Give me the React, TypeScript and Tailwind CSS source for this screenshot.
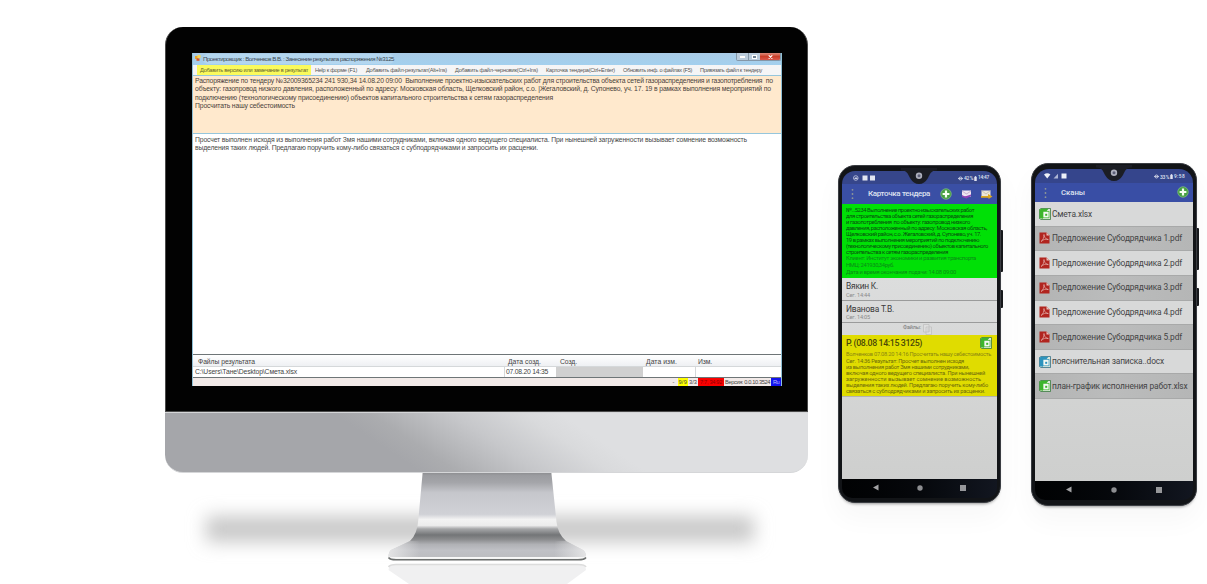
import { useLayoutEffect, useRef, useState, type ReactNode } from "react";

/** One line of text whose letter spacing is set so that it spans the given width. */
function Line({ w, className = "", children }: { w: number; className?: string; children: string }) {
  const ref = useRef<HTMLSpanElement>(null);
  const [spacing, setSpacing] = useState(0);
  useLayoutEffect(() => {
    const el = ref.current;
    if (!el) return;
    const natural = el.getBoundingClientRect().width;
    setSpacing((w - natural) / children.length);
  }, [w, children]);
  return (
    <div className={`whitespace-pre ${className}`}>
      <span ref={ref} style={{ letterSpacing: spacing }}>{children}</span>
    </div>
  );
}

function TitleBar() {
  return (
    <div className="flex h-[12px] shrink-0 items-start bg-linear-to-b from-[#a9cbe6] to-[#a3d0ee] pl-[2px]">
      <svg className="mt-[2px] mr-[2px] h-[6px] w-[6px]" viewBox="0 0 6 6">
        <rect x="0" y="1" width="3" height="3" fill="#e8a62c" />
        <rect x="2.4" y="0" width="3.2" height="3" fill="#f6d65a" />
        <rect x="1.5" y="3.4" width="3" height="2.4" fill="#d9552c" />
      </svg>
      <Line w={191} className="mt-px rounded-full bg-[#b3d6ef] text-[6.1px] leading-[10px] text-[#3c4854]">
        Проектировщик : Волченков В.В. : Занесение результата распоряжения №3125
      </Line>
      <div className="ml-auto flex h-[8px] w-[45px] overflow-hidden rounded-b-[2px] border-x border-b border-[#8497a8]">
        <div className="flex w-[12px] items-center justify-center border-r border-[#8497a8] bg-[#bccddd]">
          <div className="h-[2px] w-[5px] bg-white" />
        </div>
        <div className="flex w-[11px] items-center justify-center bg-[#bccddd]">
          <div className="h-[4px] w-[5px] border border-white bg-[#6f8090]" />
        </div>
        <div className="flex flex-1 items-center justify-center bg-linear-to-b from-[#dd8b7c] via-[#c93e29] to-[#d9574a]">
          <svg className="h-[4px] w-[5px]" viewBox="0 0 5 4"><path d="M.7 .3 4.3 3.7M4.3 .3 .7 3.7" stroke="#fff" strokeWidth="1.1" /></svg>
        </div>
      </div>
    </div>
  );
}

const tools: [string, number, string][] = [
  ["Help к форме (F1)", 42, "ml-[4px]"],
  ["Добавить файл-результат(Alt+Ins)", 81, "ml-[9px]"],
  ["Добавить файл-черновик(Ctrl+Ins)", 83, "ml-[8px]"],
  ["Карточка тендера(Ctrl+Enter)", 69, "ml-[8px]"],
  ["Обновить инф. о файлах (F5)", 69, "ml-[8px]"],
  ["Привязать файл к тендеру", 62, "ml-[8px]"],
];

function MonitorScreen() {
  return (
    <div className="flex h-[333px] w-[590px] flex-col overflow-hidden border-x border-[#8fc0d6] bg-white">
      <TitleBar />
      <div className="flex h-[10px] shrink-0 items-center bg-[#f5f5f6] pl-[4px] text-[5.6px] leading-[10px] text-[#555]">
        <div className="bg-[#fafa5c] px-[3px]">
          <Line w={108} className="text-[#62622e]">Добавить версию или замечание в результат</Line>
        </div>
        {tools.map(([t, w, m]) => <Line key={t} w={w} className={m}>{t}</Line>)}
      </div>
      <div className="h-[59px] shrink-0 border-y border-[#96c6dc] bg-[#ffe9cd] pt-[1px] pl-[2px] text-[6.8px] leading-[8.3px] text-[#4a423c]">
        <Line w={578}>Распоряжение по тендеру №32009365234 241 930,34 14.08.20 09:00  Выполнение проектно-изыскательских работ для строительства объекта сетей газораспределения и газопотребления  по</Line>
        <Line w={576}>объекту: газопровод низкого давления, расположенный по адресу: Московская область, Щелковский район, с.о. |Жегаловский, д. Супонево, уч. 17. 19 в рамках выполнения мероприятий по</Line>
        <Line w={358}>подключению (технологическому присоединению) объектов капитального строительства к сетям газораспределения</Line>
        <Line w={100}>Просчитать нашу себестоимость</Line>
      </div>
      <div className="min-h-0 flex-1 pt-[2px] pl-[2px] text-[6.8px] leading-[8.3px] text-[#484848]">
        <Line w={552}>Просчет выполнен исходя из выполнения работ Змя нашими сотрудниками, включая одного ведущего специалиста. При нынешней загруженности вызывает сомнение возможность</Line>
        <Line w={343}>выделения таких людей. Предлагаю поручить кому-либо связаться с субподрядчиками и запросить их расценки.</Line>
      </div>
      <div className="h-[24px] shrink-0 border-y border-[#6e7577] text-[6.8px] text-[#444]">
        <div className="grid h-[12px] grid-cols-[311px_52px_87px_52px_1fr] border-b border-[#d5d8da] bg-linear-to-b from-white to-[#eef0f3] leading-[13px]">
          <Line w={57} className="pl-[5px]">Файлы результата</Line>
          <Line w={33} className="pl-[4px]">Дата созд.</Line>
          <Line w={17} className="pl-[4px]">Созд.</Line>
          <Line w={31} className="pl-[3px]">Дата изм.</Line>
          <Line w={14} className="pl-[3px]">Изм.</Line>
        </div>
        <div className="grid h-[10px] grid-cols-[311px_52px_87px_52px_1fr] leading-[10px]">
          <Line w={102} className="pl-[2px]">C:\Users\Танe\Desktop\Смета.xlsx</Line>
          <Line w={42} className="border-l border-[#d5d8da] pl-px">07.08.20 14:35</Line>
          <div className="bg-[#d0d0d0]" />
          <div />
          <div className="border-l border-[#d5d8da]" />
        </div>
      </div>
      <div className="flex h-[8px] shrink-0 items-center justify-end bg-[#f2eae8] text-[5.7px] leading-[8px] text-[#444]">
        <Line w={2} className="mr-[3px]">-</Line>
        <Line w={8.5} className="bg-[#ffff00] px-px">9/9</Line>
        <Line w={8} className="px-px">3/3</Line>
        <Line w={22} className="bg-[#f90000] px-[2px] text-[#8c0000]">7:7, 34:92</Line>
        <Line w={45} className="px-[1px]">Версия: 0.0.10.3524</Line>
        <Line w={6} className="bg-[#1212ee] px-[2px] text-[#b9b9ff]">Ru</Line>
      </div>
    </div>
  );
}

function Stand() {
  return (
    <svg className="block h-[111px] w-[643px]" viewBox="165 473 643 111">
      <defs>
        <linearGradient id="neck" gradientUnits="userSpaceOnUse" x1="0" y1="473" x2="0" y2="559">
          <stop offset="0" stopColor="#8f9093" />
          <stop offset=".03" stopColor="#9b9ca0" />
          <stop offset=".11" stopColor="#a4a5a9" />
          <stop offset=".23" stopColor="#c6c7cc" />
          <stop offset=".48" stopColor="#d0d1d6" />
          <stop offset=".54" stopColor="#f3f3f3" />
          <stop offset=".61" stopColor="#ececec" />
          <stop offset=".65" stopColor="#a5a6a8" />
          <stop offset=".72" stopColor="#737577" />
          <stop offset=".77" stopColor="#898a8c" />
          <stop offset=".83" stopColor="#b0b1b5" />
          <stop offset=".9" stopColor="#c0c1c6" />
          <stop offset="1" stopColor="#bbbcbf" />
        </linearGradient>
        <linearGradient id="edge">
          <stop offset="0" stopColor="#f0f0f0" stopOpacity=".75" />
          <stop offset=".16" stopColor="#f0f0f0" stopOpacity="0" />
          <stop offset=".84" stopColor="#f0f0f0" stopOpacity="0" />
          <stop offset="1" stopColor="#f0f0f0" stopOpacity=".75" />
        </linearGradient>
        <filter id="soft" x="-10%" y="-120%" width="120%" height="340%"><feGaussianBlur stdDeviation="9" /></filter>
      </defs>
      <rect x="206" y="516" width="548" height="26" fill="#c8c8c8" filter="url(#soft)" />
      <path d="M422.6 473 L418.4 519 Q417.5 534 410 541 L391 550 Q388.5 552 388.5 557 H586 Q586 552 583 550 L566 541 Q558 534 556.5 522 L551.4 473Z" fill="url(#neck)" />
      <path d="M410 541 L391 550 Q388.5 552 388.5 557 H586 Q586 552 583 550 L566 541Z" fill="url(#edge)" />
      <path d="M388.5 555.5 Q389 557.5 396 557.5 H578 Q585 557.5 586 555.5 Q586 560.5 578 560.5 H396 Q389 560.5 388.5 555.5Z" fill="#f4f4f4" />
      <path d="M388.5 557.5 Q390 559.8 396 559.8 H578 Q584.5 559.8 586 557.5" fill="none" stroke="#6c6f6e" strokeWidth="1.4" />
      <path d="M388.5 570 Q388.5 564 396 564 H578 Q586 564 586 570 L567 584 H409Z" fill="#f0f0f1" />
      <path d="M388.5 567 Q390 564.5 396 564.5 H578 Q585 564.5 586 567" fill="none" stroke="#dcdcdc" strokeWidth="1.6" />
    </svg>
  );
}

function Monitor() {
  return (
    <div className="flex w-[643px] flex-col pt-[27px]">
      <div className="flex h-[385px] justify-center rounded-t-[18px] border-x border-b border-[#4a4a4a] bg-[#020202] pt-[26px] pl-px">
        <MonitorScreen />
      </div>
      <div className="h-[61px] shrink-0 rounded-b-[18px] border-t border-b border-[#d5d6d8] bg-[linear-gradient(34deg,#a5a6aa_35%,#abacaf_40%,#c6c7ca_51%,#d9dadc_61%,#dedfe1_66%)]" />
      <Stand />
    </div>
  );
}

function SheetIcon({ kind, className = "" }: { kind: "xls" | "doc"; className?: string }) {
  const main = kind === "xls" ? "#3db52c" : "#2c93bd";
  const dark = kind === "xls" ? "#236d2b" : "#1d6079";
  return (
    <svg className={`h-[12px] w-[12px] shrink-0 ${className}`} viewBox="0 0 12 12">
      <path d="M.5 1.5 2 .5H11.5V11.5H2L.5 10.5Z" fill="#dfe9dc" stroke={dark} strokeWidth=".7" />
      <path d="M.7 1.6 2.5 .8H9.5L7.5 3.2H4V10.8L.7 10.2Z" fill={main} />
      <rect x="4" y="3.6" width="6" height="6.2" fill="#f4f8f2" stroke={main} strokeWidth=".7" />
      <rect x="6.2" y="5.8" width="2" height="2" fill={main} />
    </svg>
  );
}

function PdfIcon() {
  return (
    <svg className="h-[12px] w-[11px] shrink-0" viewBox="0 0 11 12">
      <path d="M.5 .5H7.5L10.5 3.5V11.5H.5Z" fill="#b1251f" />
      <path d="M7.5 .5V3.5H10.5Z" fill="#e9c3bd" />
      <path d="M2 9.5C4.500 8 5 5 4.700 3.200 4.500 2 5.600 2.300 5.300 3.600 5.500 6 7.500 7.600 9.300 7.500 7 6.600 4 7.600 2 9.500Z" fill="none" stroke="#f0d5d2" strokeWidth=".55" />
    </svg>
  );
}

function PlusIcon() {
  return (
    <svg className="h-[12px] w-[12px]" viewBox="0 0 12 12">
      <circle cx="6" cy="6" r="5.3" fill="#47a043" stroke="#8fc98a" strokeWidth=".6" />
      <path d="M6 2.6V9.400M2.600 6H9.400" stroke="#f4fff0" strokeWidth="2.200" />
    </svg>
  );
}

function Dots() {
  return (
    <svg className="h-[12px] w-[3px]" viewBox="0 0 3 12">
      <circle cx="1.5" cy="1.8" r=".9" fill="#8f9797" /><circle cx="1.5" cy="6" r=".9" fill="#8f9797" /><circle cx="1.5" cy="10.2" r=".9" fill="#8f9797" />
    </svg>
  );
}

function Notch({ className = "" }: { className?: string }) {
  return (
    <svg className={`absolute h-[18px] w-[36px] ${className}`} viewBox="0 0 36 18">
      <path d="M0 0H36V2.5C30 2.5 29 6 27 10Q23.5 16 18 16T9 10C7 6 6 2.5 0 2.5Z" fill="#1b1d24" />
      <circle cx="18" cy="7.800" r="3.200" fill="#aeb0bd" />
      <circle cx="18" cy="7.800" r="1.500" fill="#5c5f77" />
    </svg>
  );
}

function StatusText({ battery, time }: { battery: string; time: string }) {
  return (
    <div className="flex items-center text-[5px] leading-[8px] font-medium text-[#dfe2ef]">
      <svg className="mr-px h-[5px] w-[5px]" viewBox="0 0 5 5"><circle cx="2.5" cy="2.5" r="1.5" fill="none" stroke="#dfe2ef" strokeWidth=".8" /><path d="M0 2.5H5" stroke="#dfe2ef" strokeWidth=".7" /></svg>
      <Line w={9}>{battery}</Line>
      <svg className="mx-px h-[5px] w-[3px]" viewBox="0 0 3 6"><path d="M1 0H2V1H3V6H0V1H1Z" fill="#dfe2ef" /></svg>
      <Line w={11} className="text-[4.8px]">{time}</Line>
    </div>
  );
}

function NavBar() {
  return (
    <div className="flex h-[19px] shrink-0 items-center justify-between rounded-b-[10px] bg-linear-to-r from-[#010203] via-[#06080c] to-[#121620] px-[31px] pb-[2px]">
      <svg className="h-[7px] w-[6px]" viewBox="0 0 6 7"><path d="M0 3.5 5.5 .5V6.5Z" fill="#a3a3a5" /></svg>
      <svg className="h-[6px] w-[6px]" viewBox="0 0 6 6"><circle cx="3" cy="3" r="2.700" fill="#8d8e91" /></svg>
      <div className="h-[6px] w-[6px] bg-[#96979a]" />
    </div>
  );
}

function PhoneFrame({ className, notch, children }: { className: string; notch: string; children: ReactNode }) {
  return (
    <div className={`relative flex flex-col rounded-[17px] border border-[#3a3d42] bg-[#121417] shadow-[0_3px_3px_-2px_#999,0_14px_26px_2px_#00000008] ${className}`}>
      <div className="absolute top-[64px] -right-[3px] h-[42px] w-[2px] rounded-r-[1px] bg-[#16181b]" />
      <div className="absolute top-[124px] -right-[3px] h-[18px] w-[2px] rounded-r-[1px] bg-[#16181b]" />
      {children}
      <Notch className={notch} />
    </div>
  );
}

function TenderPhone() {
  return (
    <PhoneFrame className="h-[338px] w-[163px] px-[3px] pt-[5px] pb-[4px]" notch="left-[62px] top-[2px]">
      <div className="flex h-[13px] shrink-0 items-center rounded-t-[13px] bg-[#36468b] pt-px pr-[8px] pl-[11px]">
        <svg className="h-[6px] w-[24px]" viewBox="0 0 24 6">
          <circle cx="2.800" cy="3" r="2.300" fill="none" stroke="#c9cee5" strokeWidth=".8" /><path d="M1 4 3 2 5 4Z" fill="#c9cee5" />
          <rect x="9.500" y=".5" width="5" height="5" fill="#e3e6f2" /><rect x="17" y=".5" width="5" height="5" fill="#e3e6f2" />
        </svg>
        <div className="ml-auto"><StatusText battery="42 %" time="14:47" /></div>
      </div>
      <div className="flex h-[20px] shrink-0 items-center bg-[#3a4fa5] pr-[4px] pl-[9px]">
        <Dots />
        <Line w={62} className="ml-[14px] text-[8px] leading-[20px] font-medium text-[#dce0ef]">Карточка тендера</Line>
        <div className="ml-auto flex items-center gap-[9px]">
          <PlusIcon />
          <svg className="h-[9px] w-[11px]" viewBox="0 0 10 9"><path d="M.5 .5H9.500V6.500H.5Z" fill="#eee5f1" /><path d="M.5 .5 5 3.500 9.500 .5V1.500L5 4.500.5 1.500Z" fill="#c6b0d0" /><path d="M.5 5 3.500 6.500 9.500 4.500V6L5 8.500.5 7Z" fill="#9140b5" /></svg>
          <svg className="h-[9px] w-[12px]" viewBox="0 0 12 9"><path d="M.5 .5H9.500V6.500H.5Z" fill="#ece7d8" /><path d="M.5 .5 5 4 9.500 .5" fill="none" stroke="#bcb6a0" strokeWidth=".7" /><path d="M0 6H7V4L11.500 6.500 7.500 9V7.800H0Z" fill="#dca91e" /></svg>
        </div>
      </div>
      <div className="h-[74px] shrink-0 bg-[#00e006] pt-[2.5px] pl-[4px] text-[5.8px] leading-[6px] text-[#08500f]">
        <Line w={128}>№...5234 Выполнение проектно-изыскательских работ</Line>
        <Line w={127}>для строительства объекта сетей газораспределения</Line>
        <Line w={124}>и газопотребления  по объекту: газопровод низкого</Line>
        <Line w={141}>давления, расположенный по адресу: Московская область,</Line>
        <Line w={135}>Щелковский район, с.о. Жегаловский, д. Супонево, уч. 17.</Line>
        <Line w={133}>19 в рамках выполнения мероприятий по подключению</Line>
        <Line w={142}>(технологическому присоединению) объектов капитального</Line>
        <Line w={102}>строительства к сетям газораспределения</Line>
        <div className="pt-[.5px] leading-[7px] text-[#0b8a18]">
          <Line w={130}>Клиент: Институт экономики и развития транспорта</Line>
          <Line w={48}>НМЦ: 241930,34руб.</Line>
          <Line w={110}>Дата и время окончания подачи: 14.08 09:00</Line>
        </div>
      </div>
      <div className="flex min-h-0 flex-1 flex-col bg-linear-to-b from-[#dcdddd] to-[#cecfce] text-[#3a3a3a]">
        <div className="h-[22.5px] border-b border-[#9a9b9b] pt-[3px] pl-[4px]">
          <Line w={32} className="text-[8.4px] leading-[10px]">Вякин К.</Line>
          <Line w={24} className="text-[5.6px] leading-[8px] text-[#8b8b8b]">Сег. 14:44</Line>
        </div>
        <div className="h-[22px] border-b border-[#9a9b9b] pt-[3px] pl-[4px]">
          <Line w={48} className="text-[8.4px] leading-[10px]">Иванова Т.В.</Line>
          <Line w={24} className="text-[5.6px] leading-[7px] text-[#8b8b8b]">Сег. 14:05</Line>
        </div>
        <div className="flex h-[12.5px] shrink-0 items-start justify-center gap-[2px] pt-px pr-[4px]">
          <Line w={18} className="text-[5.4px] leading-[7px] text-[#777]">Файлы:</Line>
          <svg className="h-[11px] w-[9px]" viewBox="0 0 9 11"><path d="M.5 .5H6V8H.5ZM3 3H8.500V10.500H3Z" fill="#dedede" stroke="#b8b8b8" strokeWidth=".6" /><path d="M4 5H7.500M4 7H7.500" stroke="#bbb" strokeWidth=".5" /></svg>
        </div>
        <div className="h-[61px] shrink-0 bg-[#e0dc00] pt-[2px] pl-[4px] text-[5.7px] leading-[6px] text-[#8a8712]">
          <div className="flex justify-between pr-[5px]">
            <Line w={76} className="text-[8.8px] leading-[13px] font-medium text-[#4a4908]">Р. (08.08 14:15 3125)</Line>
            <SheetIcon kind="xls" />
          </div>
          <Line w={145} className="leading-[8px]">Волченков 07.08.20 14:16 Просчитать нашу себестоимость</Line>
          <div className="text-[#6d6b0c]">
            <Line w={118}>Сег. 14:36 Результат: Просчет выполнен исходя</Line>
            <Line w={123}>из выполнения работ Змя нашими сотрудниками,</Line>
            <Line w={139}>включая одного ведущего специалиста. При нынешней</Line>
            <Line w={135}>загруженности вызывает сомнение возможность</Line>
            <Line w={142}>выделения таких людей. Предлагаю поручить кому-либо</Line>
            <Line w={139}>связаться с субподрядчиками и запросить их расценки.</Line>
          </div>
        </div>
        <div className="h-px shrink-0 bg-[#b2b3b0]" />
      </div>
      <NavBar />
    </PhoneFrame>
  );
}

const files: { name: string; w: number; kind: "xls" | "doc" | "pdf" }[] = [
  { name: "Смета.xlsx", w: 40, kind: "xls" },
  { name: "Предложение Субодрядчика 1.pdf", w: 130, kind: "pdf" },
  { name: "Предложение Субодрядчика 2.pdf", w: 130, kind: "pdf" },
  { name: "Предложение Субодрядчика 3.pdf", w: 130, kind: "pdf" },
  { name: "Предложение Субодрядчика 4.pdf", w: 130, kind: "pdf" },
  { name: "Предложение Субодрядчика 5.pdf", w: 130, kind: "pdf" },
  { name: "пояснительная записка..docx", w: 112, kind: "doc" },
  { name: "план-график исполнения работ.xlsx", w: 135.5, kind: "xls" },
];

function ScansPhone() {
  return (
    <PhoneFrame className="h-[343px] w-[166px] px-[3px] pt-[5px] pb-[5px]" notch="left-[64px] top-[1px]">
      <div className="flex h-[14px] shrink-0 items-center rounded-t-[14px] bg-[#35458c] pr-[8px] pl-[9px]">
        <svg className="h-[6px] w-[24px]" viewBox="0 0 24 6">
          <path d="M0 1.5Q3.200-.8 6.400 1.500L3.200 5.500Z" fill="#edf0f8" /><path d="M9.500 5.500H14V.8Z" fill="#aeb6d5" /><rect x="17.500" y=".5" width="5" height="5" fill="#edf0f8" />
        </svg>
        <div className="ml-auto pt-[1px]"><StatusText battery="33 %" time="9:58" /></div>
      </div>
      <div className="flex h-[19px] shrink-0 items-center bg-[#394ea5] pr-[4px] pl-[9px]">
        <Dots />
        <Line w={24} className="ml-[14px] text-[7.8px] leading-[18px] font-medium text-[#dce0ef]">Сканы</Line>
        <div className="ml-auto pb-[2px]"><PlusIcon /></div>
      </div>
      <div className="flex min-h-0 flex-1 flex-col bg-linear-to-b from-[#dcdddd] to-[#cecfce] text-[8.4px] text-[#444445]">
        {files.map((f, i) => (
          <div
            key={f.name}
            className={`flex h-[24.65px] shrink-0 items-center gap-[2px] border-b border-[#a8a9a9] pl-[4px] ${i % 2 ? "bg-linear-to-r from-[#b3b4b4] via-[#bbbcbc] to-[#b5b6b6]" : "bg-[#d8d9d9]"}`}
          >
            {f.kind === "pdf" ? <PdfIcon /> : <SheetIcon kind={f.kind} className="-mr-px" />}
            <Line w={f.w}>{f.name}</Line>
          </div>
        ))}
      </div>
      <NavBar />
    </PhoneFrame>
  );
}

export default function App() {
  return (
    <main className="flex h-[584px] w-[1207px] items-start overflow-hidden bg-white pl-[165px] font-['Liberation_Sans',sans-serif]">
      <Monitor />
      <div className="ml-[30px] flex gap-[30px] pt-[163px] font-['Roboto',sans-serif]">
        <div className="pt-[2px]"><TenderPhone /></div>
        <ScansPhone />
      </div>
    </main>
  );
}
